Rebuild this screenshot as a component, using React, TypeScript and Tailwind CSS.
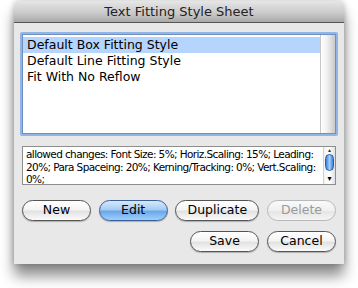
import React from 'react';

const font = { fontFamily: '"Lucida Grande", "DejaVu Sans", sans-serif' };

const items = ['Default Box Fitting Style', 'Default Line Fitting Style', 'Fit With No Reflow'];

function AquaButton({ label, variant = 'normal', wide }: { label: string; variant?: 'normal' | 'default' | 'disabled'; wide?: boolean }) {
  const base = `h-[21px] ${wide ? 'w-[84px]' : 'w-[69px]'} rounded-full flex items-center justify-center text-[12.5px] leading-none`;
  if (variant === 'default') {
    return (
      <button className={`${base} border border-[#3b5e96] text-black bg-[linear-gradient(to_bottom,#d6e9fb_0%,#a6ccf3_45%,#6aa8ea_55%,#9fd0fb_100%)] shadow-[0_1px_1px_rgba(0,0,0,0.25)]`}>
        {label}
      </button>
    );
  }
  if (variant === 'disabled') {
    return (
      <button className={`${base} border border-[#b8b8b8] text-[#9a9a9a] bg-[linear-gradient(to_bottom,#fafafa_0%,#f0f0f0_50%,#e6e6e6_55%,#f4f4f4_100%)]`}>
        {label}
      </button>
    );
  }
  return (
    <button className={`${base} border border-[#555] text-black bg-[linear-gradient(to_bottom,#ffffff_0%,#f4f4f4_45%,#e2e2e2_55%,#fbfbfb_100%)] shadow-[0_1px_1px_rgba(0,0,0,0.25)]`}>
      {label}
    </button>
  );
}

export default function App() {
  return (
    <div className="w-[358px] h-[288px] bg-white pt-[1px] pl-[14px]" style={font}>
      <div className="w-[330px] h-[263px] rounded-t-[6px] bg-[#e8e8e8] flex flex-col shadow-[0_12px_14px_rgba(0,0,0,0.45),0_0_6px_rgba(0,0,0,0.25)]">
        {/* title bar */}
        <div className="h-[22px] rounded-t-[6px] border-b border-[#555] bg-[linear-gradient(to_bottom,#e6e6e6,#c8c8c8_60%,#a9a9a9)] flex items-center justify-center text-[13px] text-[#222]">
          Text Fitting Style Sheet
        </div>

        {/* style list */}
        <div className="mt-[9px] mx-[6px] h-[104px] rounded-[2px] border-[2px] border-[#91b5e6] flex">
          <div className="flex-1 flex border border-[#6f8fc1] bg-white">
            <div className="flex-1 pt-[2px] text-[12.5px] leading-[16px] text-black">
              {items.map((it, i) => (
                <div key={it} className={`pl-[4px] h-[16px] ${i === 0 ? 'bg-[#b5d5ff]' : ''}`}>{it}</div>
              ))}
            </div>
            <div className="w-[15px] border-l border-[#c8c8c8] bg-[linear-gradient(to_right,#ffffff,#f2f2f2_40%,#c9c9c9)]" />
          </div>
        </div>

        {/* description */}
        <div className="mt-[10px] mx-[8px] h-[39px] border border-[#8e8e8e] bg-white flex">
          <div className="flex-1 pl-[3px] pr-[1px] pt-[1px] text-[10.5px] leading-[12.5px] tracking-[-0.6px] text-black overflow-hidden">
            allowed changes: Font Size: 5%; Horiz.Scaling: 15%; Leading: 20%; Para Spaceing: 20%; Kerning/Tracking: 0%; Vert.Scaling: 0%;
          </div>
          <div className="w-[12px] flex flex-col border-l border-[#d0d0d0] bg-[linear-gradient(to_right,#f4f4f4,#ffffff,#e0e0e0)]">
            <div className="h-[6px] flex items-center justify-center text-[6px] leading-none text-[#333]">▴</div>
            <div className="mx-auto mt-[1px] w-[9px] h-[17px] rounded-full border border-[#2c5ea8] bg-[linear-gradient(to_right,#3d7fd8,#a6d0ff_50%,#3d7fd8)]" />
            <div className="flex-1" />
            <div className="h-[10px] flex items-center justify-center text-[8px] leading-none text-black">▾</div>
          </div>
        </div>

        {/* action buttons */}
        <div className="mt-[15px] mx-[8px] flex justify-between">
          <AquaButton label="New" />
          <AquaButton label="Edit" variant="default" />
          <AquaButton label="Duplicate" wide />
          <AquaButton label="Delete" variant="disabled" />
        </div>

        {/* save / cancel */}
        <div className="mt-[10px] mx-[8px] flex justify-end gap-[8px]">
          <AquaButton label="Save" />
          <AquaButton label="Cancel" />
        </div>
      </div>
    </div>
  );
}
